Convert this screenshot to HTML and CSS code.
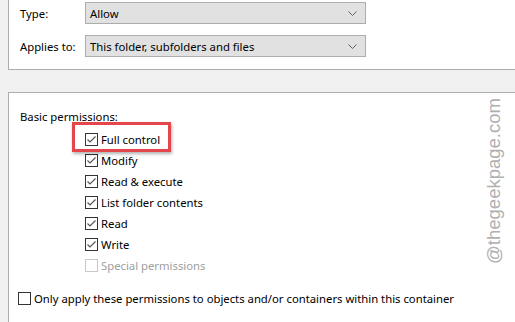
FILE: index.html
```html
<!DOCTYPE html>
<html lang="en">

<head>
    <meta charset="UTF-8" />
    <title>Permission Entry</title>
    <link rel="stylesheet" href="styles.css">
</head>

<body>
    <div class="dialog">
        <div class="panel panel-top">
            <div class="field">
                <label class="field-label">Type:</label>
                <div class="select">
                    <span>Allow</span>
                    <svg class="chevron" width="9" height="5" viewBox="0 0 9 5"><polyline points="0.5,0.5 4.5,4.5 8.5,0.5" fill="none" stroke="#606060" stroke-width="1"/></svg>
                </div>
            </div>
            <div class="field">
                <label class="field-label">Applies to:</label>
                <div class="select">
                    <span>This folder, subfolders and files</span>
                    <svg class="chevron" width="9" height="5" viewBox="0 0 9 5"><polyline points="0.5,0.5 4.5,4.5 8.5,0.5" fill="none" stroke="#606060" stroke-width="1"/></svg>
                </div>
            </div>
        </div>

        <div class="panel panel-main">
            <div class="section-title">Basic permissions:</div>
            <ul class="perm-list" id="permList"></ul>

            <div class="check-row only-apply">
                <span class="box"></span>
                <span>Only apply these permissions to objects and/or containers within this container</span>
            </div>
        </div>
    </div>

    <div class="watermark">@thegeekpage.com</div>

    <script>
        const perms = [
            { name: "Full control", checked: true, highlight: true },
            { name: "Modify", checked: true },
            { name: "Read & execute", checked: true },
            { name: "List folder contents", checked: true },
            { name: "Read", checked: true },
            { name: "Write", checked: true },
            { name: "Special permissions", checked: false, disabled: true }
        ];

        const list = document.getElementById("permList");
        const tick = '<svg width="11" height="11" viewBox="0 0 11 11"><polyline points="1.5,5.5 4,8 9.5,2.5" fill="none" stroke="#555" stroke-width="1.2"/></svg>';

        perms.forEach(p => {
            const li = document.createElement("li");
            li.className = "check-row";
            if (p.disabled) li.classList.add("disabled");
            if (p.highlight) li.classList.add("highlight");
            li.innerHTML = `<span class="box">${p.checked ? tick : ""}</span><span>${p.name}</span>`;
            list.appendChild(li);
        });
    </script>
</body>

</html>
```

FILE: styles.css
```css
:root {
    --bg: #f0f0f0;
    --line: #adadad;
    --select: #e1e1e1;
    --text: #000;
    --muted: #a0a0a0;
    --red: #e5464c;
}

body {
    margin: 0;
    background-color: var(--bg);
    font-family: 'Noto Sans', sans-serif;
    font-size: 11.3px;
    color: var(--text);
    overflow: hidden;
    height: 322px;
}

.dialog {
    padding-left: 8px;
}

.panel {
    background-color: #fff;
    border-left: 1px solid var(--line);
}

.panel-top {
    border-bottom: 1px solid var(--line);
    padding: 2px 0 12px 11px;
    display: flex;
    flex-direction: column;
    gap: 11px;
}

.field {
    display: flex;
    align-items: center;
}

.field-label {
    width: 65px;
}

.select {
    width: 267px;
    height: 20px;
    border: 1px solid var(--line);
    background-color: var(--select);
    display: flex;
    align-items: center;
    justify-content: space-between;
    padding: 0 8px 0 4px;
}

.chevron {
    display: block;
}

.panel-main {
    margin-top: 22px;
    border-top: 1px solid var(--line);
    height: 214px;
    padding: 15px 0 0 11px;
}

.section-title {
    line-height: 17px;
}

.perm-list {
    list-style: none;
    margin: 0;
    padding: 4px 0 0 65px;
}

.check-row {
    display: flex;
    align-items: center;
    gap: 3px;
    height: 21px;
}

.box {
    width: 11px;
    height: 11px;
    border: 1px solid #333;
    background-color: #fff;
    display: flex;
}

.check-row.disabled {
    color: var(--muted);
}

.check-row.disabled .box {
    border-color: #c8c8c8;
}

.check-row.highlight {
    position: relative;
}

.check-row.highlight::after {
    content: "";
    position: absolute;
    left: -13px;
    top: -7px;
    width: 93px;
    height: 24px;
    border: 3px solid var(--red);
    box-shadow: 1px 2px 3px rgba(0, 0, 0, 0.3);
}

.only-apply {
    margin: 12px 0 0 -2px;
}

.watermark {
    position: absolute;
    left: 494px;
    top: 181px;
    transform: translate(-50%, -50%) rotate(-90deg);
    font-family: 'Liberation Sans', sans-serif;
    font-size: 18.5px;
    color: #b0b0b0;
    white-space: nowrap;
}
```
